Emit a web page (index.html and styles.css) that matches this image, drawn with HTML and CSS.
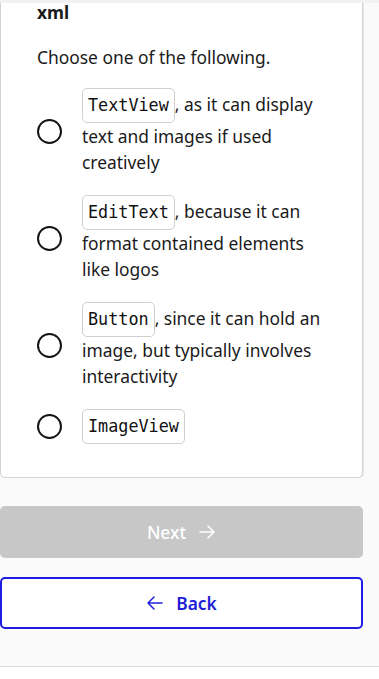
FILE: index.html
```html
<!DOCTYPE html>
<html>
<head>
<meta charset="utf-8">
<link rel="stylesheet" href="styles.css">
</head>
<body>
<div class="topstrip"></div>
<main class="page">
  <section class="card">
    <h2 class="question">xml</h2>
    <p class="prompt">Choose one of the following.</p>
    <div class="options">
      <label class="option">
        <span class="radio"></span>
        <span class="otext"><code class="chip">TextView</code>, as it can display text and images if used creatively</span>
      </label>
      <label class="option">
        <span class="radio"></span>
        <span class="otext"><code class="chip">EditText</code>, because it can format contained elements like logos</span>
      </label>
      <label class="option">
        <span class="radio"></span>
        <span class="otext"><code class="chip">Button</code>, since it can hold an image, but typically involves interactivity</span>
      </label>
      <label class="option">
        <span class="radio"></span>
        <span class="otext"><code class="chip">ImageView</code></span>
      </label>
    </div>
  </section>
  <div class="actions">
    <button class="btn next">Next
      <svg width="18" height="18" viewBox="0 0 18 18" fill="none" stroke="currentColor" stroke-width="1.5" stroke-linecap="round" stroke-linejoin="round"><path d="M2 9h14M10 3l6 6-6 6"/></svg>
    </button>
    <button class="btn back">
      <svg width="18" height="18" viewBox="0 0 18 18" fill="none" stroke="currentColor" stroke-width="1.5" stroke-linecap="round" stroke-linejoin="round"><path d="M16 9H2M8 3L2 9l6 6"/></svg>
      Back
    </button>
  </div>
</main>
<footer class="footer"></footer>
</body>
</html>
```

FILE: styles.css
```css
* { box-sizing: border-box; }
html, body { margin: 0; padding: 0; }
body {
  background: #fafafa;
  font-family: "Noto Sans", "Open Sans", sans-serif;
  color: #1a1a1a;
  width: 379px;
  height: 679px;
  overflow: hidden;
}
.topstrip {
  height: 3px;
  background: #f2f2f2;
}
.page {
  width: 363px;
  padding-bottom: 37px;
}
.card {
  background: #fff;
  border: 1px solid #d2d2d2;
  border-top: none;
  border-radius: 0 0 5px 5px;
  box-shadow: 1px 0 0 #e6e6e6;
  padding: 0 36px 33px 36px;
  overflow: hidden;
}
.question {
  margin: -4px 0 0 0;
  font-size: 17.4px;
  font-weight: 700;
  line-height: 26px;
}
.prompt {
  margin: 19px 0 0 0;
  font-size: 17.4px;
  line-height: 26px;
}
.options {
  margin-top: 18px;
  display: flex;
  flex-direction: column;
  gap: 20px;
}
.option {
  display: flex;
  align-items: center;
  gap: 20px;
}
.radio {
  flex: 0 0 25px;
  width: 25px;
  height: 25px;
  border: 2.5px solid #151515;
  border-radius: 50%;
}
.otext {
  font-size: 17.4px;
  line-height: 26px;
  flex: 1;
}
.chip {
  display: inline-block;
  font-family: "DejaVu Sans Mono", monospace;
  font-size: 16.8px;
  line-height: 25px;
  padding: 4px 5px;
  border: 1px solid #cfcfcf;
  border-radius: 5px;
  color: #111;
  background: #fff;
}
.actions {
  margin-top: 28px;
  display: flex;
  flex-direction: column;
  gap: 19px;
}
.btn {
  height: 52px;
  width: 100%;
  border-radius: 5px;
  font-family: "Noto Sans", "Open Sans", sans-serif;
  font-size: 17.4px;
  display: flex;
  align-items: center;
  justify-content: center;
  gap: 12px;
  padding: 0;
}
.next {
  background: #c7c7c7;
  border: none;
  color: #fff;
  font-weight: 500;
}
.back {
  background: #fff;
  border: 2px solid #1d1de3;
  color: #2020d8;
  font-weight: 600;
}
.footer {
  background: #fff;
  border-top: 1px solid #dcdcdc;
  height: 20px;
}
```
